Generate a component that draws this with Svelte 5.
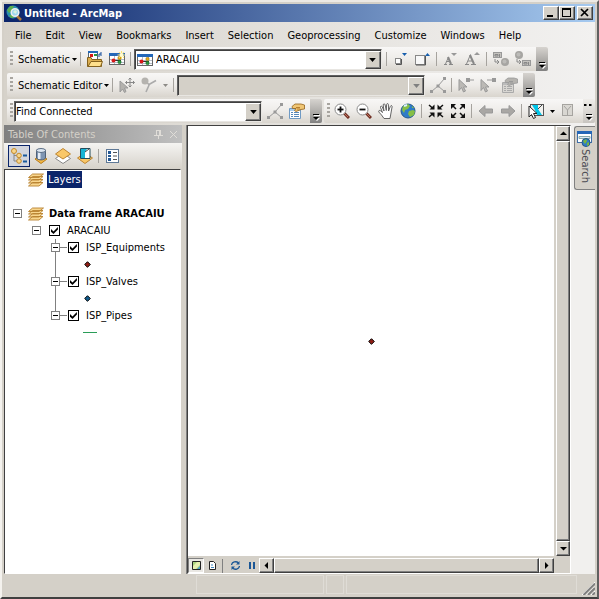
<script>
  let schematic = $state('ARACAIU');
  let task = $state('Find Connected');
  let layers = $state([
    { name: 'ISP_Equipments', shape: 'point', color: '#8f1d14', on: true },
    { name: 'ISP_Valves', shape: 'point', color: '#0f5a8c', on: true },
    { name: 'ISP_Pipes', shape: 'line', color: '#2a9d58', on: true }
  ]);
  let groupOn = $state(true);

  const menus = ['File', 'Edit', 'View', 'Bookmarks', 'Insert', 'Selection', 'Geoprocessing', 'Customize', 'Windows', 'Help'];
</script>

{#snippet schematicGrid()}
  <rect x="0.5" y="2.5" width="15" height="11" fill="#fff" stroke="#666" />
  <path d="M0 2h16v3H0z" fill="#2467b8" />
  <path d="M1 8.5h14M1 11.5h14M5.5 5v8M11.5 5v8" stroke="#b4bcc8" />
  <path d="M4 9.5h8" stroke="#333" />
  <circle cx="4.5" cy="9.5" r="2" fill="#d81818" />
  <circle cx="10.5" cy="7" r="1.7" fill="#e8a818" stroke="#8a6a10" stroke-width="0.5" />
  <circle cx="10.5" cy="11" r="1.7" fill="#28983a" stroke="#14601e" stroke-width="0.5" />
{/snippet}

{#snippet icon(name)}
  <svg class="icon" viewBox="0 0 16 16" aria-hidden="true" fill="none">
    {#if name === 'open'}
      <rect x="1.5" y="0.5" width="9" height="8" fill="#fff" stroke="#567" />
      <path d="M1 0h10v2H1z" fill="#2467b8" />
      <rect x="3" y="3" width="3" height="3" fill="#d81818" />
      <path d="M7 3h3v2H7z" fill="#28983a" />
      <path d="M12 6V3M12 3h2M14 1v4" stroke="#174e9c" />
      <path d="M0.5 15.5v-9H4l1 2h9.5v7z" fill="#dcae50" stroke="#84621e" />
      <path d="M1 15.5l3-5h11.5l-2 5z" fill="#ffe08c" stroke="#84621e" />
    {:else if name === 'new'}
      {@render schematicGrid()}
      <path d="M12.5 0v8M8.5 4h7.5M10 1l5 6M15 1l-5 6" stroke="#ffe36a" />
      <circle cx="12.5" cy="4" r="2" fill="#fffbd0" />
    {:else if name === 'shrink'}
      <rect x="2.5" y="7.5" width="5" height="5" fill="#fff" stroke="#888" />
      <path d="M3 13.5h5.5V8" stroke="#555" />
      <path d="M9 2h5l-2.5 3z" fill="#175fad" />
    {:else if name === 'grow'}
      <rect x="0.5" y="4.5" width="9" height="9" fill="#f8f8f8" stroke="#888" />
      <path d="M1 14h9.500V5" stroke="#555" />
      <path d="M10 5h5l-2.500-3z" fill="#175fad" />
    {:else if name === 'fontDown'}
      <path d="M1 13.500h3M6 13.500h4M2.500 13l3-7" stroke="#888" />
      <path d="M5 6l3 7" stroke="#888" stroke-width="2" />
      <path d="M3.500 10.500h4" stroke="#888" />
      <path d="M8 2h6l-3 3z" fill="#999" />
    {:else if name === 'fontUp'}
      <path d="M0 13.500h4M6 13.500h5M1.500 13l4-9.500M3 10h5" stroke="#888" />
      <path d="M5 4l4 9" stroke="#888" stroke-width="2" />
      <path d="M9 4h6l-3-3z" fill="#999" />
    {:else if name === 'propagate' || name === 'replace'}
      {#if name === 'propagate'}
        <rect x="0.5" y="1.5" width="8" height="5" fill="#c4c2be" stroke="#999" />
        <path d="M2 3.500h3v1.500H2zM6.500 3v3" stroke="#888" />
        <circle cx="12" cy="11" r="4" fill="#a6a5a2" />
        <circle cx="11.5" cy="10.5" r="2" fill="#bcbbb8" />
      {:else}
        <circle cx="4" cy="4" r="4" fill="#a6a5a2" />
        <circle cx="3.5" cy="3.5" r="2" fill="#bcbbb8" />
        <rect x="7.5" y="9.5" width="8" height="5" fill="#c4c2be" stroke="#999" />
        <path d="M9 11.500h3v1.500H9zM13.500 11v3" stroke="#888" />
      {/if}
      <path d="M2 8v3h4M4 9l2 2-2 2" stroke="#888" />
    {:else if name === 'moveCursor'}
      <path d="M1 4v11l2.500-3 2 3.500 1.500-1-1.500-3.500H9z" fill="#b4b2ae" stroke="#999" />
      <path d="M11 1v9M6.500 5.500h9M9.500 2.500L11 1l1.500 1.500M9.500 8.500L11 10l1.500-1.500M8 4L6.500 5.500 8 7M14 4l1.500 1.500L14 7" stroke="#888" />
    {:else if name === 'branch'}
      <path d="M5 5l3 2.500 7-4M8.500 7L5 15" stroke="#aaa" stroke-width="1.600" />
      <circle cx="4" cy="4" r="3.500" fill="#b5b3af" />
    {:else if name === 'nodes'}
      <path d="M1.500 14.500L8 9l6.500-7.500M8 9l6.500 5.500" stroke="#999" />
      <path d="M0 13h3v3H0zM6.500 7.500h3v3h-3zM13 0h3v3h-3zM13 13h3v3h-3z" fill="#999" />
    {:else if name === 'selectRoot' || name === 'selectEnd'}
      <path d="M1 2.500v11l2.500-3 2 4.500 2-1-2-4H9z" fill="#bbb9b5" stroke="#999" />
      {#if name === 'selectRoot'}
        <path d="M8 1h4v4H8zM12 2.500h4v1h-4z" fill="#999" />
      {:else}
        <path d="M7 2.500h5v1H7zM12 1h4v4h-4z" fill="#999" />
      {/if}
    {:else if name === 'propsOff' || name === 'props'}
      {@const off = name === 'propsOff'}
      <path d="M0.5 5.500h11v10H0.500z" fill={off ? '#d8d6d2' : '#fff'} stroke={off ? '#aaa' : '#6f9ac4'} />
      <path d="M1 6h10v2H1z" fill={off ? '#bbb' : '#a7cdf0'} />
      <path d="M2 9.500h2M5 9.500h5M2 11.500h2M5 11.500h5M2 13.500h2M5 13.500h5" stroke={off ? '#aaa' : '#5689bb'} />
      <path d="M3 3.500l3-2.500h6l3.500 1v4L12 6.500 7 8.500 5.500 7.500 7 5.500H3.500z" fill={off ? '#b5b3af' : '#f0c675'} stroke={off ? '#999' : '#94631c'} stroke-width="0.800" />
      <path d="M7 4.500h4M8 6h3" stroke={off ? '#999' : '#b98030'} />
    {:else if name === 'zoomIn' || name === 'zoomOut'}
      <path d="M10 10l5 5" stroke="#713024" stroke-width="3" />
      <path d="M10 10l4 4" stroke="#bd725d" />
      <circle cx="6.5" cy="6.5" r="5.500" fill="#fff" stroke="#8a8a8a" />
      <path d="M3.500 6.500h6" stroke="#111" stroke-width="1.800" />
      {#if name === 'zoomIn'}<path d="M6.500 3.500v6" stroke="#111" stroke-width="1.800" />{/if}
    {:else if name === 'pan'}
      <path d="M6 15.500L3.500 12 0.800 9c-.6-1.500.8-2 1.800-1.200L4.500 9.500 2.500 4.500c-.4-1.500 1.200-2 1.700-.7L6 8 5.200 2c0-1.500 1.600-1.500 1.900-.2L8.300 7.500 8.600 1.500c.2-1.300 1.700-1.200 1.800.1L10.600 8l1.800-4.800c.6-1.200 2-.6 1.700.6L12.800 11l-.8 4.500z" fill="#fff" stroke="#555" stroke-width="0.900" />
    {:else if name === 'globe'}
      <circle cx="8" cy="8" r="7" fill="#2e7cc8" stroke="#24588a" />
      <path d="M3 3l5-2 2 2-2 3-3 1-1 3-2-3zM9 8l4-1 2 1-1 4-4 2-2-3zM12 3l2 2-2 0z" fill="#86bf46" />
      <path d="M4 3l3-1" stroke="#dcf2ff" stroke-width="2" />
    {:else if name === 'fixedIn'}
      <path d="M1 2l4 3.500M15 2l-4 3.500M1 14l4-3.500M15 14l-4-3.500" stroke="#111" stroke-width="1.500" />
      <path d="M1.500 6.500h5v-5zM14.500 6.500h-5v-5zM1.500 9.500h5v5zM14.500 9.500h-5v5z" fill="#111" />
    {:else if name === 'fixedOut'}
      <path d="M2 2l4 4M14 2l-4 4M2 14l4-4M14 14l-4-4" stroke="#111" stroke-width="1.500" />
      <path d="M1 1h5L1 6zM15 1h-5l5 5zM1 15h5l-5-5zM15 15h-5l5-5z" fill="#111" />
    {:else if name === 'back'}
      <path d="M1 8l6-5.500v3.500h7.500v4H7v3.500z" fill="#a9a7a4" stroke="#999" />
    {:else if name === 'forward'}
      <path d="M15 8L9 2.500v3.500H1.500v4H9v3.500z" fill="#a9a7a4" stroke="#999" />
    {:else if name === 'selectFeatures'}
      <rect x="2.500" y="1.500" width="13" height="11" fill="#f1f1ee" stroke="#555" />
      <path d="M4 2h6l0 4 4 6H9L7 7z" fill="#00c5e8" />
      <path d="M10 6l4-4" stroke="#444" />
      <path d="M1 3v11l2.500-2.500 2 4 2-1-2-4H9z" fill="#fff" stroke="#222" />
    {:else if name === 'clearSelection'}
      <rect x="1.500" y="1.500" width="10" height="11" fill="#d9d7d2" stroke="#a6a4a0" />
      <path d="M3 3l3.500 4v5M6.500 7L10 3" stroke="#a6a4a0" />
    {:else if name === 'listOrder'}
      <path d="M3 5v8h4M3 7.500h5" stroke="#888" />
      <circle cx="3" cy="3" r="2.500" fill="#f8d68c" stroke="#c28a2c" />
      <circle cx="8" cy="7.500" r="2.300" fill="#f8d68c" stroke="#c28a2c" />
      <circle cx="8" cy="13" r="2.300" fill="#f8d68c" stroke="#c28a2c" />
      <path d="M12 7.500h4M12 13.500h4" stroke="#1a5a9c" stroke-width="2" />
    {:else if name === 'listSource'}
      <path d="M2 11l6-4 6 4-6 4.500z" fill="#f4b843" stroke="#b57a1d" />
      <path d="M3.500 2v8c1 2.500 8 2.500 9 0V2z" fill="#7e95b2" stroke="#4f6178" />
      <path d="M5 4v7h2.500V4z" fill="#e4ecf6" />
      <ellipse cx="8" cy="2.500" rx="4.500" ry="2" fill="#dce6f1" stroke="#5a6d84" />
    {:else if name === 'listVisible'}
      <path d="M0.500 10.500L8 5l7.500 5.500L8 15.500z" fill="#fff" stroke="#888" />
      <path d="M0.500 6L8 0.500 15.500 6 8 11z" fill="#f9c768" stroke="#bd8430" />
    {:else if name === 'listSelection'}
      <path d="M0.500 10L8 5l7.500 5L8 15.500z" fill="#f9c768" stroke="#bd8430" />
      <path d="M3.500 0.500h9.500v10H3.500z" fill="#fff" stroke="#234c5c" />
      <path d="M4 1h6L8 4l0 6H4z" fill="#18b4d4" />
      <path d="M8 4l4-3" stroke="#444" />
    {:else if name === 'options'}
      <rect x="1.500" y="1.500" width="12" height="13" fill="#fff" stroke="#5e7896" />
      <path d="M3 3h3v3H3zM3 7h3v2H3zM3 10h3v3H3z" fill="#245894" />
      <path d="M8 4.500h4M8 8h4M8 11.500h4" stroke="#555" />
    {:else if name === 'frame'}
      <path d="M0.5 14L4.500 10.500h10.500L11 14zM0.500 11L4.500 7.500h10.500L11 11zM0.500 8L4.500 4.500h10.500L11 8zM0.500 5.500L4.500 2h11L11 5.500z" fill="#f8d68e" stroke="#b8812f" stroke-width="0.900" />
    {/if}
  </svg>
{/snippet}

{#snippet tool(name, label, disabled = false)}
  <button class="tool" aria-label={label} title={label} {disabled}>{@render icon(name)}</button>
{/snippet}

{#snippet down()}
  <svg class="down" viewBox="0 0 5 3" aria-hidden="true"><path d="M0 0h5L2.500 3z" fill="currentColor" /></svg>
{/snippet}

{#snippet overflow(more = false)}
  <button class="overflow" aria-label="Toolbar Options">
    <svg viewBox="0 0 12 24" aria-hidden="true">
      {#if more}<path d="M1 5h2v2H1zM3 5.500h1v1H3zM6 5h2v2H6zM8 5.500h1v1H8z" fill="#000" />{/if}
      <path d="M4 16h6v1H4zM4 19h6l-3 3z" fill="#fff" />
      <path d="M3 15h6v1H3zM3 18h6l-3 3z" fill="#000" />
    </svg>
  </button>
{/snippet}

{#snippet expander(label)}
  <button class="expander" aria-label={label}></button>
{/snippet}

<div class="window">
  <header class="titlebar">
    <svg class="logo" viewBox="0 0 16 16" aria-hidden="true">
      <circle cx="7" cy="7" r="6.500" fill="#2b8fae" />
      <path d="M1 5l3-4 4 0-2 4-3 3zM3 10l3 0 2 3-3 0z" fill="#5dad4f" />
      <path d="M11 11l4 4" stroke="#b0793a" stroke-width="2.500" />
      <circle cx="9" cy="7.500" r="3.800" fill="#9fd8ee" stroke="#eee" stroke-width="1.500" />
      <path d="M7 7l2-2 2 1-1 3z" fill="#d8f2e0" />
    </svg>
    <h1>Untitled - ArcMap</h1>
    <button class="caption" aria-label="Minimize">
      <svg viewBox="0 0 14 12"><path d="M3 8h6v2H3z" /></svg>
    </button>
    <button class="caption" aria-label="Maximize">
      <svg viewBox="0 0 14 12"><path d="M2 1h9v9H2zM3 3v6h7V3z" fill-rule="evenodd" /></svg>
    </button>
    <button class="caption close" aria-label="Close">
      <svg viewBox="0 0 14 12"><path d="M3 2l7 7M10 2l-7 7" stroke="#000" stroke-width="1.700" /></svg>
    </button>
  </header>

  <div class="docks">
    <nav class="menubar">
      {#each menus as item}
        <button>{item}</button>
      {/each}
    </nav>

    <div class="row">
      <div class="toolbar">
        <span class="grip"></span>
        <button class="text">Schematic {@render down()}</button>
        <span class="sep"></span>
        {@render tool('open', 'Open Schematic Diagrams')}
        {@render tool('new', 'Generate New Schematic Diagram')}
        <span class="sep"></span>
        <div class="combo with-icon">
          <svg class="combo-icon" viewBox="0 0 16 16" aria-hidden="true">{@render schematicGrid()}</svg>
          <select aria-label="Schematic diagram" bind:value={schematic}>
            <option>ARACAIU</option>
          </select>
          <span class="drop">{@render down()}</span>
        </div>
        <span class="sep"></span>
        {@render tool('shrink', 'Decrease Symbol Size')}
        {@render tool('grow', 'Increase Symbol Size')}
        <span class="sep"></span>
        {@render tool('fontDown', 'Decrease Label Size', true)}
        {@render tool('fontUp', 'Increase Label Size', true)}
        <span class="sep"></span>
        {@render tool('propagate', 'Propagate Schematic Selection', true)}
        {@render tool('replace', 'Propagate Map Selection', true)}
        {@render overflow()}
      </div>
    </div>

    <div class="row">
      <div class="toolbar">
        <span class="grip"></span>
        <button class="text">Schematic Editor {@render down()}</button>
        <span class="sep"></span>
        {@render tool('moveCursor', 'Edit/Move Schematic Features', true)}
        {@render tool('branch', 'Edit Link', true)}
        <button class="split" aria-label="More link tools" disabled>{@render down()}</button>
        <span class="sep"></span>
        <div class="combo off">
          <select aria-label="Layout" disabled></select>
          <span class="drop">{@render down()}</span>
        </div>
        {@render tool('nodes', 'Apply Layout Task', true)}
        <span class="sep"></span>
        {@render tool('selectRoot', 'Set Schematic Root', true)}
        {@render tool('selectEnd', 'Set End of Main Line', true)}
        {@render tool('propsOff', 'Layout Algorithm Properties', true)}
        {@render overflow()}
      </div>
    </div>

    <div class="row">
      <div class="toolbar">
        <span class="grip"></span>
        <div class="combo">
          <select aria-label="Trace task" bind:value={task}>
            <option>Find Connected</option>
          </select>
          <span class="drop">{@render down()}</span>
        </div>
        {@render tool('nodes', 'Trace', true)}
        {@render tool('props', 'Trace Properties')}
        {@render overflow()}
      </div>
      <div class="toolbar fill">
        <span class="grip"></span>
        {@render tool('zoomIn', 'Zoom In')}
        {@render tool('zoomOut', 'Zoom Out')}
        {@render tool('pan', 'Pan')}
        {@render tool('globe', 'Full Extent')}
        <span class="sep"></span>
        {@render tool('fixedIn', 'Fixed Zoom In')}
        {@render tool('fixedOut', 'Fixed Zoom Out')}
        <span class="sep"></span>
        {@render tool('back', 'Previous Extent', true)}
        {@render tool('forward', 'Next Extent', true)}
        <span class="sep"></span>
        {@render tool('selectFeatures', 'Select Features')}
        <button class="split" aria-label="More selection tools">{@render down()}</button>
        {@render tool('clearSelection', 'Clear Selected Features', true)}
        {@render overflow(true)}
      </div>
    </div>
  </div>

  <main>
    <aside class="toc">
      <div class="toc-title">
        <h2>Table Of Contents</h2>
        <button aria-label="Auto Hide">
          <svg viewBox="0 0 9 9"><path d="M2 .5h5M2.500 0v5M5.500 0v5M6.500 0v5M0 5.500h9M4.500 6v3" /></svg>
        </button>
        <button aria-label="Close">
          <svg viewBox="0 0 9 9"><path d="M1 1l7 7M8 1L1 8" /></svg>
        </button>
      </div>
      <div class="toc-tools">
        <button class="tool active" aria-label="List By Drawing Order">{@render icon('listOrder')}</button>
        {@render tool('listSource', 'List By Source')}
        {@render tool('listVisible', 'List By Visibility')}
        {@render tool('listSelection', 'List By Selection')}
        <span class="sep"></span>
        {@render tool('options', 'Options')}
      </div>
      <div class="tree">
        <div class="node frame">
          <span class="blank"></span>
          {@render icon('frame')}
          <span class="selected">Layers</span>
        </div>
        <div class="node"></div>
        <div class="node frame">
          {@render expander('Collapse data frame')}
          {@render icon('frame')}
          <strong>Data frame ARACAIU</strong>
        </div>
        <div class="node group">
          {@render expander('Collapse ARACAIU')}
          <label><input type="checkbox" bind:checked={groupOn} />ARACAIU</label>
        </div>
        <ul>
          {#each layers as layer}
            <li>
              <div class="node">
                {@render expander('Collapse ' + layer.name)}
                <span class="branch"></span>
                <label><input type="checkbox" bind:checked={layer.on} />{layer.name}</label>
              </div>
              <div class="node symbol">
                {#if layer.shape === 'point'}
                  <svg viewBox="0 0 14 7"><path d="M4.500 .7L7.300 3.500 4.500 6.300 1.700 3.500z" fill={layer.color} stroke="#000" /></svg>
                {:else}
                  <svg viewBox="0 0 14 7"><path d="M0 3h14v1H0z" fill={layer.color} /></svg>
                {/if}
              </div>
            </li>
          {/each}
        </ul>
      </div>
    </aside>

    <section class="view">
      <div class="map">
        <svg class="feature" viewBox="0 0 7 7"><path d="M3.500 .7L6.300 3.500 3.500 6.300 .7 3.500z" fill="#8f1d14" stroke="#000" /></svg>
      </div>
      <div class="scroll vertical">
        <button aria-label="Scroll up"><svg viewBox="0 0 7 7"><path d="M0 5h7L3.500 1.500z" /></svg></button>
        <span class="thumb"></span>
        <button aria-label="Scroll down"><svg viewBox="0 0 7 7"><path d="M0 2h7L3.500 5.500z" /></svg></button>
      </div>
      <div class="view-bar">
        <button class="mode on" aria-label="Data View">
          <svg viewBox="0 0 9 9"><path d="M.5.5h8v8h-8z" fill="#a9d37c" stroke="#222" /><path d="M1 5l4-4h3v3L4 8H1z" fill="#e5efb0" /><path d="M5 8l3-3v3z" fill="#4f9ac8" /></svg>
        </button>
        <button class="mode" aria-label="Layout View">
          <svg viewBox="0 0 9 9"><path d="M1.500.5h4l2 2v6h-6z" fill="#fff" stroke="#222" /><path d="M3 4h2M3 6.500h3" stroke="#3f87bd" /></svg>
        </button>
        <span class="rule"></span>
        <button class="mode" aria-label="Refresh View">
          <svg viewBox="0 0 9 9" fill="none" stroke="#1b5796"><path d="M.5 4a4 3.500 0 0 1 7-2M8.500 5a4 3.500 0 0 1-7 2" stroke-width="1.300" /><path d="M8.500 0v3.500H5zM.5 9V5.500H4z" fill="#1b5796" stroke="none" /></svg>
        </button>
        <button class="mode" aria-label="Pause Drawing">
          <svg viewBox="0 0 9 9"><path d="M2 1h2v7H2zM6 1h2v7H6z" fill="#1b5796" /></svg>
        </button>
        <div class="scroll">
          <button aria-label="Scroll left"><svg viewBox="0 0 7 7"><path d="M5 0v7L1.500 3.500z" /></svg></button>
          <span class="thumb"></span>
          <button aria-label="Scroll right"><svg viewBox="0 0 7 7"><path d="M2 0v7l3.500-3.500z" /></svg></button>
        </div>
      </div>
    </section>

    <div class="side">
      <button class="tab">
        <svg viewBox="0 0 16 16" aria-hidden="true">
          <rect x=".5" y=".5" width="14" height="11" fill="#fff" stroke="#3e6ea8" />
          <path d="M0 0h15v3H0z" fill="#2467b8" />
          <path d="M2 5.500h11v2H2z" fill="#dfeaf5" stroke="#8aa" />
          <circle cx="9" cy="11.500" r="4" fill="#2e7cc8" stroke="#24588a" />
          <path d="M6 10l3-2 1 2-2 3zM10 12l2-1v3l-2 1z" fill="#79b63e" />
        </svg>
        <span>Search</span>
      </button>
    </div>
  </main>

  <footer>
    <span class="cell message"></span>
    <span class="cell small"></span>
    <span class="cell coords"></span>
    <svg class="sizer" viewBox="0 0 13 13" aria-hidden="true">
      <path d="M0 13L13 0M4.500 13L13 4.500M9 13l4-4" stroke="#fff" />
      <path d="M1.500 13L13 1.500M6 13l7-7M10.500 13l2.500-2.500" stroke="#808080" stroke-width="2" />
    </svg>
  </footer>
</div>

<style>
  :global(body) {
    background: #d4d0c8;
  }

  .window {
    display: flex;
    flex-direction: column;
    box-sizing: border-box;
    height: 100vh;
    padding: 2px;
    overflow: hidden;
    border: 2px solid;
    border-color: #ece9e4 #606060 #404040 #f4f2ee;
    background: #d4d0c8;
    color: #000;
    font: 11px/17px "DejaVu Sans Condensed", Tahoma, sans-serif;
  }

  button, select, input {
    box-sizing: border-box;
    margin: 0;
    padding: 0;
    border: 0;
    border-radius: 0;
    background: none;
    color: inherit;
    font: inherit;
  }

  h1, h2 {
    margin: 0;
    font-size: 11px;
  }

  svg {
    display: block;
    flex: none;
  }

  .icon {
    width: 16px;
    height: 16px;
  }

  .titlebar {
    display: flex;
    align-items: center;
    flex: none;
    height: 18px;
    padding: 0 2px;
    background: linear-gradient(to right, #0a246a, #a6caf0);
    color: #fff;
  }

  .logo {
    width: 16px;
    height: 16px;
    margin-right: 2px;
  }

  .titlebar h1 {
    flex: 1;
  }

  .caption {
    width: 16px;
    height: 14px;
    border: 1px solid;
    border-color: #fff #404040 #404040 #fff;
    background: #d4d0c8;
    box-shadow: inset -1px -1px #808080;
  }

  .caption svg {
    width: 14px;
    height: 12px;
  }

  .close {
    margin-left: 2px;
  }

  .docks {
    flex: none;
    padding-top: 1px;
    background: linear-gradient(to right, #d6d2ca, #f2f1f0);
  }

  .menubar {
    display: flex;
    height: 24px;
    padding-left: 4px;
  }

  .menubar button {
    padding: 0 7px;
  }

  .row {
    display: flex;
    gap: 2px;
    padding: 0 0 2px 3px;
  }

  .toolbar {
    display: flex;
    align-items: center;
    height: 24px;
    border-radius: 2px;
    background: linear-gradient(#f8f7f6, #eeece9 50%, #d9d5ce);
  }

  .toolbar.fill {
    flex: 1;
  }

  .grip {
    width: 3px;
    height: 16px;
    margin: 0 1px 0 3px;
    background: repeating-linear-gradient(#a8a5a0 0 2px, transparent 2px 4px);
  }

  .text {
    display: flex;
    align-items: center;
    gap: 2px;
    height: 22px;
    padding: 0 1px 0 4px;
  }

  .down {
    width: 5px;
    height: 3px;
  }

  .sep {
    flex: none;
    width: 1px;
    height: 14px;
    margin: 0 3px 0 2px;
    background: #a6a39e;
  }

  .tool {
    display: grid;
    place-items: center;
    flex: none;
    width: 22px;
    height: 22px;
  }

  .split {
    display: grid;
    place-items: center;
    width: 11px;
    height: 22px;
  }

  .split:disabled {
    color: #8c8a86;
  }

  .overflow {
    width: 12px;
    height: 24px;
    margin-left: 2px;
    border-radius: 0 2px 2px 0;
    background: linear-gradient(#d6d3cf, #a9a7a4 60%, #808080);
  }

  .fill .overflow {
    margin-left: auto;
    background: linear-gradient(#efedea, #c8c5c0);
  }

  .overflow svg {
    width: 12px;
    height: 24px;
  }

  .combo {
    position: relative;
    width: 248px;
    height: 21px;
    margin-right: 2px;
  }

  .combo select {
    appearance: none;
    width: 100%;
    height: 100%;
    padding: 0 18px 0 1px;
    border: 1px solid;
    border-color: #606060 #e8e6e2 #e8e6e2 #606060;
    background: #fff;
    box-shadow: inset 1px 1px #404040;
    opacity: 1;
  }

  .combo.with-icon select {
    padding-left: 21px;
  }

  .combo-icon {
    position: absolute;
    top: 3px;
    left: 3px;
    width: 16px;
    height: 16px;
  }

  .combo.off select {
    background: #d4d0c8;
  }

  /* drop button face laid over the native select */
  .drop {
    position: absolute;
    top: 2px;
    right: 1px;
    bottom: 1px;
    display: grid;
    place-items: center;
    box-sizing: border-box;
    width: 16px;
    border: 1px solid;
    border-color: #fff #404040 #404040 #fff;
    background: #d4d0c8;
    box-shadow: inset -1px -1px #808080;
    pointer-events: none;
  }

  .drop .down {
    width: 7px;
    height: 4px;
  }

  .off .drop {
    color: #808080;
  }

  main {
    display: flex;
    flex: 1;
    min-height: 0;
  }

  .toc {
    display: flex;
    flex-direction: column;
    width: 178px;
    margin-right: 5px;
  }

  .toc-title {
    display: flex;
    align-items: center;
    gap: 6px;
    height: 18px;
    padding: 0 4px;
    background: linear-gradient(to right, #808080, #c0c0c0);
    color: #d4d0c8;
  }

  .toc-title h2 {
    flex: 1;
    font-weight: normal;
  }

  .toc-title svg {
    width: 9px;
    height: 9px;
    fill: none;
    stroke: #e0ddd8;
  }

  .toc-tools {
    display: flex;
    align-items: center;
    height: 26px;
    padding-left: 4px;
    background: linear-gradient(#f5f4f2, #d6d2ca);
  }

  .active {
    border: 1px solid #0a246a;
    background: #d3d6de;
  }

  .tree {
    flex: 1;
    margin-right: 1px;
    padding: 1px 0;
    border: 1px solid;
    border-color: #404040 #fff #fff #404040;
    background: #fff;
    overflow: hidden;
  }

  .node {
    display: flex;
    align-items: center;
    height: 17px;
    white-space: nowrap;
  }

  .node.frame {
    padding-left: 8px;
    gap: 6px;
  }

  .node.frame strong {
    margin-left: -1px;
  }

  .blank {
    width: 9px;
  }

  .selected {
    margin-left: -3px;
    padding: 0 1px;
    background: #0a246a;
    color: #fff;
  }

  .expander {
    flex: none;
    width: 9px;
    height: 9px;
    border: 1px solid #808080;
    background: linear-gradient(#000, #000) center / 5px 1px no-repeat #fff;
  }

  .node.group {
    gap: 8px;
    padding-left: 27px;
  }

  label {
    display: flex;
    align-items: center;
    gap: 7px;
  }

  input {
    appearance: none;
    width: 11px;
    height: 11px;
    border: 1px solid #000;
    background: #fff;
  }

  input:checked::after {
    content: "";
    display: block;
    width: 9px;
    height: 9px;
    background: #000;
    clip-path: polygon(11% 34%, 39% 60%, 88% 11%, 88% 40%, 39% 90%, 11% 63%);
  }

  ul {
    margin: 0;
    padding: 0 0 0 46px;
    list-style: none;
  }

  /* trunk line runs behind the expanders */
  li {
    background: linear-gradient(#808080, #808080) 4px 0 / 1px 100% no-repeat;
  }

  li:last-child {
    background-size: 1px 8px;
  }

  .branch {
    width: 7px;
    height: 1px;
    margin-right: 1px;
    background: #808080;
  }

  .symbol {
    padding-left: 32px;
  }

  .symbol svg {
    width: 14px;
    height: 7px;
  }

  .view {
    display: grid;
    grid-template-columns: 1fr 14px;
    grid-template-rows: 1fr 15px;
    flex: 1;
    gap: 2px;
    border: 1px solid;
    border-color: #404040 #fff #fff #404040;
    box-shadow: -1px 0 #808080;
  }

  .map {
    display: grid;
    place-items: center;
    background: #fff;
  }

  .feature {
    width: 7px;
    height: 7px;
  }

  .scroll {
    display: flex;
    flex: 1;
  }

  .vertical {
    flex-direction: column;
  }

  .scroll button,
  .thumb {
    display: grid;
    place-items: center;
    flex: none;
    box-sizing: border-box;
    width: 15px;
    height: 15px;
    border: 1px solid;
    border-color: #fff #404040 #404040 #fff;
    background: #d4d0c8;
    box-shadow: inset -1px -1px #808080;
  }

  .vertical button,
  .vertical .thumb {
    width: 14px;
  }

  .scroll .thumb {
    flex: 1;
  }

  .scroll svg {
    width: 7px;
    height: 7px;
  }

  .view-bar {
    display: flex;
    align-items: center;
    grid-column: 1;
  }

  .mode {
    display: grid;
    place-items: center;
    width: 16px;
    height: 15px;
  }

  .mode svg {
    width: 9px;
    height: 9px;
  }

  .mode.on {
    border: 1px solid;
    border-color: #808080 #fff #fff #808080;
    background: #eae8e4;
  }

  .rule {
    width: 1px;
    height: 14px;
    margin: 0 4px 0 2px;
    background: #808080;
  }

  .side {
    width: 24px;
    background: #f1f0ee;
  }

  .tab {
    display: flex;
    flex-direction: column;
    align-items: center;
    gap: 2px;
    width: 21px;
    height: 64px;
    margin: 1px 0 0 3px;
    padding-top: 4px;
    border: 1px solid #808080;
    border-right: 0;
    border-radius: 3px 0 0 3px;
    background: #d4d0c8;
    color: #4a4a52;
  }

  .tab svg {
    width: 16px;
    height: 16px;
  }

  .tab span {
    writing-mode: vertical-rl;
  }

  footer {
    display: flex;
    align-items: center;
    flex: none;
    gap: 2px;
    height: 21px;
    padding-left: 192px;
  }

  .cell {
    box-sizing: border-box;
    height: 19px;
    border: 1px solid #dfdcd6;
  }

  .message {
    flex: 128;
  }

  .small {
    width: 18px;
  }

  .coords {
    flex: 232;
  }

  .sizer {
    align-self: flex-end;
    width: 13px;
    height: 13px;
    margin-left: 3px;
  }
</style>
